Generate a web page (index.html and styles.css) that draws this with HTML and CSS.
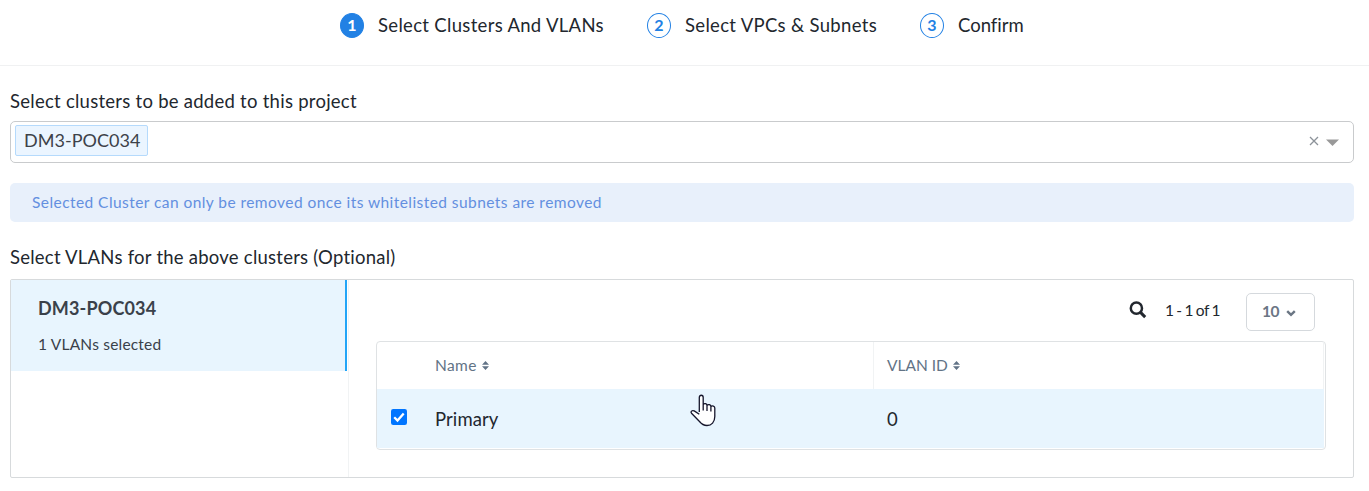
FILE: index.html
```html
<!DOCTYPE html>
<html lang="en">
<head>
<meta charset="utf-8">
<title>Select Clusters And VLANs</title>
<link rel="stylesheet" href="styles.css">
</head>
<body>
<header class="steps">
  <div class="step step-clusters"><span class="badge active">1</span><span class="t-clusters">Select Clusters And VLANs</span></div>
  <div class="step step-vpcs"><span class="badge">2</span><span class="t-vpcs">Select VPCs &amp; Subnets</span></div>
  <div class="step"><span class="badge">3</span><span class="t-confirm">Confirm</span></div>
</header>
<main>
  <div class="label"><span class="t-label1">Select clusters to be added to this project</span></div>
  <div class="select">
    <span class="tag">DM3-POC034</span>
    <svg class="clear" width="10" height="10" viewBox="0 0 10 10"><path d="M1 1l8 8M9 1l-8 8" stroke="#8c9299" stroke-width="1.3"/></svg>
    <svg class="caret" width="13" height="7" viewBox="0 0 13 7"><path d="M0 0.5h13L6.5 7z" fill="#999"/></svg>
  </div>
  <div class="info"><span class="t-info">Selected Cluster can only be removed once its whitelisted subnets are removed</span></div>
  <div class="label"><span class="t-label2">Select VLANs for the above clusters (Optional)</span></div>
  <section class="panel">
    <aside class="sidebar">
      <div class="cluster">
        <div class="cluster-name">DM3-POC034</div>
        <div class="cluster-sub">1 VLANs selected</div>
      </div>
    </aside>
    <div class="content">
      <div class="toolbar">
        <svg class="search" width="18" height="18" viewBox="0 0 18 18" fill="none" stroke="#22272e"><circle cx="7.4" cy="7.2" r="5.6" stroke-width="2.5"/><path d="M11.5 11.4l4.7 4.7" stroke-width="3"/></svg>
        <span class="range">1 - 1 of 1</span>
        <button class="page-size"><span>10</span><svg width="10" height="7" viewBox="0 0 10 7"><path d="M1.200 1.200L5 4.800l3.800-3.600" fill="none" stroke="#6b7684" stroke-width="2.500"/></svg></button>
      </div>
      <div class="table">
        <div class="row head">
          <div class="cell check"></div>
          <div class="cell name"><span class="t-name">Name</span><svg class="sort" width="7" height="9" viewBox="0 0 7 9"><path d="M3.500 0L7 3.700H0zM0 5.200h7L3.500 9z" fill="#627386"/></svg></div>
          <div class="cell vlan"><span class="t-vlan">VLAN ID</span><svg class="sort" width="7" height="9" viewBox="0 0 7 9"><path d="M3.500 0L7 3.700H0zM0 5.200h7L3.500 9z" fill="#627386"/></svg></div>
        </div>
        <div class="row body">
          <div class="cell check"><svg width="16" height="16" viewBox="0 0 16 16"><rect width="16" height="16" rx="2.200" fill="#0075ff"/><path d="M3.200 8.300l3.300 3.300 6.200-7.200" fill="none" stroke="#fff" stroke-width="2.300"/></svg></div>
          <div class="cell name"><span class="t-primary">Primary</span></div>
          <div class="cell vlan"><span>0</span></div>
        </div>
      </div>
    </div>
  </section>
</main>
<svg class="cursor" width="26" height="33" viewBox="0 0 26 33"><path d="M9.300 18V3.400C9.300 .5 13.200 .5 13.200 3.400V10.500C14.200 9 17 9.500 17 11.400C18.200 10 20.800 10.600 20.900 12.400C22.300 11.300 24.800 12 24.800 14V22.500C24.800 28 21.500 31.500 17 31.500C13.500 31.500 11.500 30 9.500 27.500L1.500 19.200C.3 17.600 2 16 4.200 16.900L9.300 20.200M13.200 10.500V16.500M17 11.400V17M20.900 12.400V17.500" fill="#fff" stroke="#15152b" stroke-width="1.300" stroke-linejoin="round"/></svg>
</body>
</html>
```
FILE: styles.css
```css
* { box-sizing: border-box; }
body {
  margin: 0;
  height: 491px;
  overflow: hidden;
  background: #fff;
  color: #22272e;
  font-family: Lato, sans-serif;
  font-size: 18.5px;
  font-variant-ligatures: none;
  line-height: 24px;
  white-space: nowrap;
}
svg { display: block; flex: none; }
.steps {
  display: flex;
  height: 66px;
  padding: 13px 0 0 340px;
  border-bottom: 1px solid #f0f1f2;
}
.step { display: flex; gap: 14px; height: 25px; }
.step-clusters { width: 307px; }
.step-vpcs { width: 273px; }
.t-clusters { letter-spacing: 0.32px; }
.t-vpcs { letter-spacing: 0.32px; }
.t-confirm { letter-spacing: 0; }
.t-label1 { letter-spacing: 0.26px; }
.t-label2 { letter-spacing: 0.24px; }
.t-info { letter-spacing: 0.44px; }
.t-name { letter-spacing: 0.4px; }
.t-vlan { letter-spacing: 0; }
.t-primary { letter-spacing: 0.1px; }
.badge {
  width: 24px;
  height: 25px;
  flex: none;
  border: 1px solid #2281e4;
  border-radius: 50%;
  color: #2281e4;
  font-size: 16px;
  font-weight: 700;
  line-height: 22px;
  text-align: center;
}
.badge.active { background: #2281e4; color: #fff; }
main { padding: 23px 15px 0 10px; }
.label { height: 24px; }
.select {
  display: flex;
  height: 42px;
  margin-top: 8px;
  padding: 3px 14px 0 4px;
  border: 1px solid #c9cbcd;
  border-radius: 5px;
}
.tag {
  width: 133px;
  height: 31px;
  padding-left: 8px;
  border: 1px solid #b5dafc;
  border-radius: 2px;
  background: #ebf5ff;
  color: #3d4249;
  font-size: 18px;
  letter-spacing: 0.05px;
  line-height: 29px;
}
.clear { margin: 11px 7px 0 auto; }
.caret { margin-top: 14px; }
.info {
  height: 39px;
  margin: 20px 0 23px;
  padding-left: 22px;
  border-radius: 5px;
  background: #e8f0fb;
  color: #638fe0;
  font-size: 15.5px;
  line-height: 38px;
}
.panel {
  display: flex;
  height: 199px;
  margin-top: 10px;
  border: 1px solid #d7dadc;
  border-radius: 2px;
}
.sidebar { width: 338px; border-right: 1px solid #f1f3f4; }
.cluster {
  width: 336px;
  height: 91px;
  padding: 16px 0 0 27px;
  border-right: 2px solid #22a5f7;
  background: #e8f5fe;
  color: #3a414a;
}
.cluster-name { font-size: 18px; font-weight: 700; letter-spacing: 0.15px; }
.cluster-sub { margin-top: 12px; font-size: 15.5px; letter-spacing: 0.2px; }
.content { flex: 1; padding: 13px 27px 0 27px; }
.toolbar { display: flex; justify-content: flex-end; padding-right: 11px; height: 48px; font-size: 15.5px; }
.search { margin: 8px 18px 0 0; }
.range { width: 81px; line-height: 35px; letter-spacing: -0.4px; word-spacing: -0.8px; }
.page-size {
  display: flex;
  align-items: center;
  gap: 7px;
  width: 69px;
  height: 38px;
  padding: 0 0 3px 15px;
  border: 1px solid #d5d9dd;
  border-radius: 5px;
  background: #fff;
  color: #6b7684;
  font: 700 15.5px Lato, sans-serif;
  letter-spacing: -0.6px;
}
.page-size svg { margin-top: 5px; }
.table {
  height: 109px;
  padding: 0 1px 1px 0;
  border: 1px solid #dfe2e4;
  border-radius: 4px;
}
.row { display: flex; }
.head { height: 47px; color: #627386; font-size: 15.5px; border-right: 1px solid #f1f3f4; }
.head .name, .head .vlan { padding-bottom: 1px; }
.body { height: 59px; background: #e8f5fe; }
.cell { display: flex; align-items: center; }
.check { width: 58px; padding: 0 0 3px 14px; }
.name { width: 438px; }
.vlan { padding-left: 14px; }
.head .vlan { border-left: 1px solid #f1f3f4; padding-left: 13px; }
.sort { margin-left: 5px; }
.cursor { position: absolute; left: 690px; top: 394px; }
```
